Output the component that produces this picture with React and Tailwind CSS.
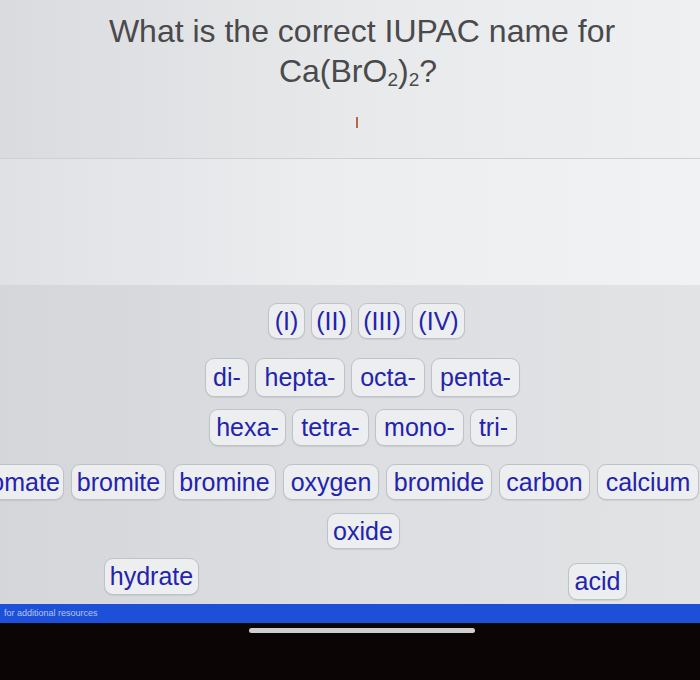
import React from "react";

const font = { fontFamily: '"Liberation Sans", Arial, sans-serif' };

function Chip({ label, w, h = "h-[36px]" }) {
  return (
    <div
      className={`flex shrink-0 items-center justify-center rounded-[9px] border border-[#bfc2c6] bg-[#eceef0] text-[25px] leading-none text-[#2323ad] shadow-[0_1px_1px_rgba(0,0,0,0.08)] ${w} ${h}`}
    >
      {label}
    </div>
  );
}

export default function App() {
  return (
    <div className="w-[700px] h-[680px] overflow-hidden flex flex-col" style={font}>
      {/* Question area */}
      <div className="h-[158px] shrink-0 bg-gradient-to-r from-[#dadbde] via-[#e8e9eb] to-[#eff0f2] flex flex-col items-center pl-[24px]">
        <div className="pt-[11px] text-[32px] leading-[40px] text-[#4a4a4c] text-center">
          <div>What is the correct IUPAC name for</div>
          <div className="-ml-[8px]">
            Ca(BrO<span className="text-[19px] align-[-4px]">2</span>)
            <span className="text-[19px] align-[-4px]">2</span>?
          </div>
        </div>
        <div className="mt-[17px] -ml-[10px] h-[11px] w-[2px] bg-[#b06a48]" />
      </div>
      <div className="h-px shrink-0 bg-[#cfd0d3]" />
      <div className="h-[126px] shrink-0 bg-gradient-to-r from-[#e0e1e4] via-[#eceef0] to-[#f1f2f4]" />

      {/* Answer tiles area */}
      <div className="h-[319px] shrink-0 bg-gradient-to-r from-[#d4d6d9] via-[#dcdee1] to-[#e1e3e5] flex flex-col pt-[18px]">
        <div className="flex justify-center gap-[6px] pl-[33px]">
          <Chip label="(I)" w="w-[37px]" />
          <Chip label="(II)" w="w-[41px]" />
          <Chip label="(III)" w="w-[48px]" />
          <Chip label="(IV)" w="w-[53px]" />
        </div>
        <div className="mt-[19px] flex justify-center gap-[6px] pl-[25px]">
          <Chip label="di-" w="w-[44px]" h="h-[39px]" />
          <Chip label="hepta-" w="w-[90px]" h="h-[39px]" />
          <Chip label="octa-" w="w-[74px]" h="h-[39px]" />
          <Chip label="penta-" w="w-[89px]" h="h-[39px]" />
        </div>
        <div className="mt-[12px] flex justify-center gap-[6px] pl-[26px]">
          <Chip label="hexa-" w="w-[77px]" h="h-[37px]" />
          <Chip label="tetra-" w="w-[77px]" h="h-[37px]" />
          <Chip label="mono-" w="w-[89px]" h="h-[37px]" />
          <Chip label="tri-" w="w-[47px]" h="h-[37px]" />
        </div>
        <div className="mt-[18px] flex w-max gap-[7px] -ml-[36px]">
          <Chip label="bromate" w="w-[100px]" />
          <Chip label="bromite" w="w-[95px]" />
          <Chip label="bromine" w="w-[103px]" />
          <Chip label="oxygen" w="w-[96px]" />
          <Chip label="bromide" w="w-[106px]" />
          <Chip label="carbon" w="w-[91px]" />
          <Chip label="calcium" w="w-[102px]" />
        </div>
        <div className="mt-[13px] flex justify-center pl-[26px]">
          <Chip label="oxide" w="w-[73px]" />
        </div>
        <div className="mt-[9px] flex items-start justify-between pl-[104px] pr-[73px]">
          <Chip label="hydrate" w="w-[95px]" h="h-[37px]" />
          <div className="mt-[5px]">
            <Chip label="acid" w="w-[59px]" h="h-[37px]" />
          </div>
        </div>
      </div>

      {/* Blue bar */}
      <div className="h-[19px] shrink-0 bg-[#1c50d8] flex items-center pl-[4px]">
        <span className="text-[9px] leading-none text-[#b8c4ea]">for additional resources</span>
      </div>

      {/* Black bottom */}
      <div className="flex-1 bg-[#0b0506] pt-[5px]">
        <div className="ml-[249px] h-[5px] w-[226px] rounded-full bg-[#cfcfd1]" />
      </div>
    </div>
  );
}
